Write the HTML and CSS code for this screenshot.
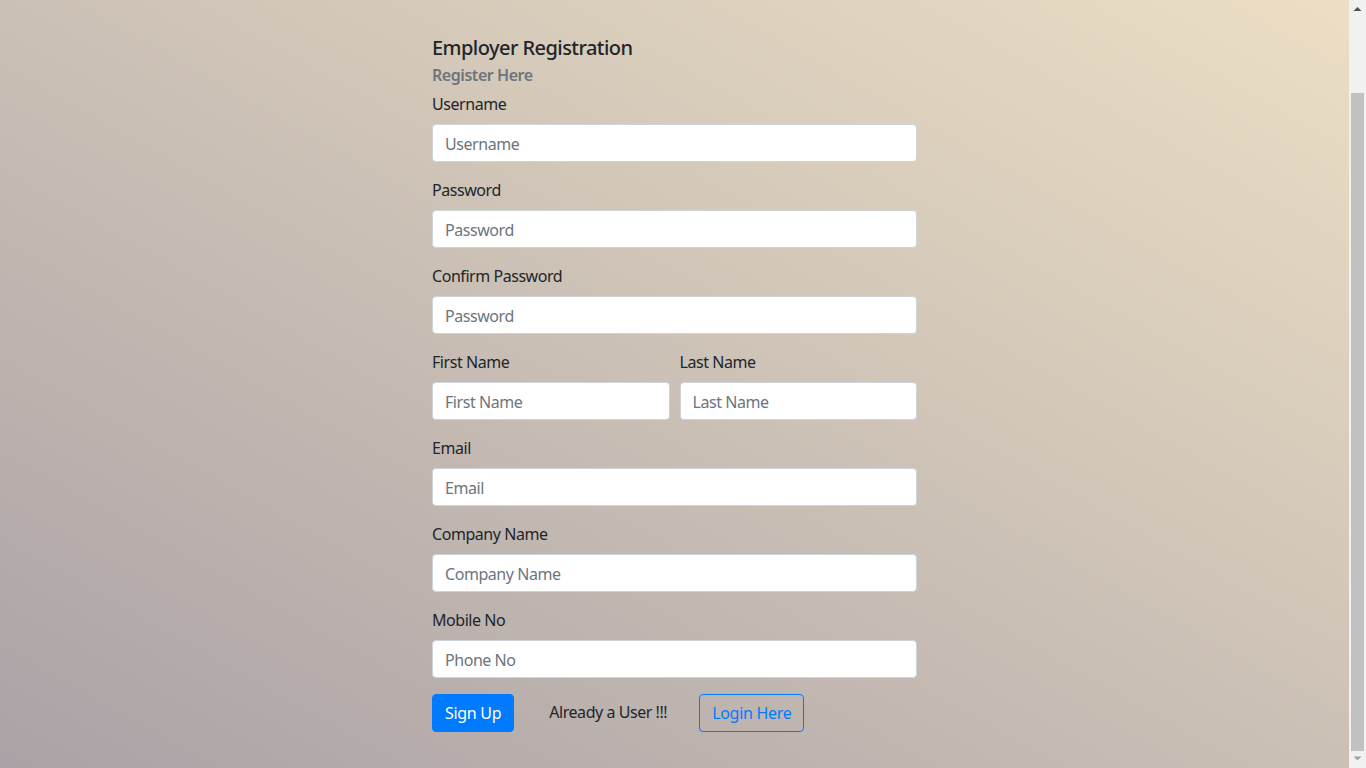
FILE: index.html
```html
<!DOCTYPE html>
<html lang="en">
<head>
<meta charset="utf-8">
<title>Employer Registration</title>
<link rel="stylesheet" href="styles.css">
</head>
<body>
<main class="page">
  <form class="reg-form">
    <h5 class="title">Employer Registration</h5>
    <h6 class="subtitle">Register Here</h6>
    <div class="group">
      <label class="label">Username</label>
      <input class="control" type="text" placeholder="Username">
    </div>
    <div class="group">
      <label class="label">Password</label>
      <input class="control" type="password" placeholder="Password">
    </div>
    <div class="group">
      <label class="label">Confirm Password</label>
      <input class="control" type="password" placeholder="Password">
    </div>
    <div class="split">
      <div class="group">
        <label class="label">First Name</label>
        <input class="control" type="text" placeholder="First Name">
      </div>
      <div class="group">
        <label class="label">Last Name</label>
        <input class="control" type="text" placeholder="Last Name">
      </div>
    </div>
    <div class="group">
      <label class="label">Email</label>
      <input class="control" type="email" placeholder="Email">
    </div>
    <div class="group">
      <label class="label">Company Name</label>
      <input class="control" type="text" placeholder="Company Name">
    </div>
    <div class="group">
      <label class="label">Mobile No</label>
      <input class="control" type="text" placeholder="Phone No">
    </div>
    <div class="actions">
      <button class="btn btn-primary" type="button">Sign Up</button>
      <span class="already">Already a User !!!</span>
      <a class="btn btn-outline" href="#">Login Here</a>
    </div>
  </form>
</main>
<aside class="scrollbar" aria-hidden="true">
  <div class="sb-btn">
    <svg width="17" height="17" viewBox="0 0 17 17"><polygon points="4.5,11 12.5,11 8.5,7" fill="#505050"/></svg>
  </div>
  <div class="sb-track"><div class="sb-thumb"></div></div>
  <div class="sb-btn">
    <svg width="17" height="17" viewBox="0 0 17 17"><polygon points="4.5,5.5 12.5,5.5 8.5,9.5" fill="#a3a3a3"/></svg>
  </div>
</aside>
</body>
</html>
```

FILE: styles.css
```css
html {
  background: linear-gradient(to top right, #aaa2a6 0%, #eddfc5 100%) fixed;
  min-height: 100%;
}
body {
  margin: 0;
  font-family: "Noto Sans", "Open Sans", sans-serif;
  font-size: 16px;
  line-height: 24px;
  letter-spacing: -0.45px;
  color: #212529;
}
.page {
  display: flex;
  justify-content: center;
  padding: 36px 17px 36px 0;
}
.reg-form {
  width: 485px;
}
.title {
  margin: 0 0 6px;
  font-size: 20px;
  line-height: 24px;
  font-weight: 500;
  letter-spacing: -0.55px;
  color: #212529;
}
.subtitle {
  margin: 0 0 7px;
  font-size: 16px;
  line-height: 19px;
  font-weight: 600;
  color: #6c757d;
}
.group {
  margin-bottom: 16px;
}
.label {
  display: inline-block;
  margin-bottom: 8px;
}
.control {
  display: block;
  box-sizing: border-box;
  width: 100%;
  height: 38px;
  padding: 7px 12px 5px;
  border: 1px solid #ced4da;
  border-radius: 4px;
  background: #fff;
  font: inherit;
  letter-spacing: inherit;
  color: #495057;
}
.control::placeholder {
  color: #6c757d;
  opacity: 1;
}
.split {
  display: grid;
  grid-template-columns: 1fr 1fr;
  column-gap: 10px;
}
.actions {
  display: flex;
  align-items: center;
}
.btn {
  display: inline-block;
  box-sizing: border-box;
  padding: 6px 12px;
  border: 1px solid transparent;
  border-radius: 4px;
  font: inherit;
  letter-spacing: -0.3px;
  line-height: 24px;
  text-decoration: none;
  cursor: pointer;
}
.btn-primary {
  background: #007bff;
  border-color: #007bff;
  color: #fff;
}
.btn-outline {
  background: transparent;
  border-color: #007bff;
  color: #007bff;
}
.already {
  margin: -2px 32px 0 35px;
}

/* browser-style scrollbar, drawn over the right edge */
.scrollbar {
  position: fixed;
  top: 0;
  right: 0;
  width: 17px;
  height: 100vh;
  display: flex;
  flex-direction: column;
  background: #f1f1f1;
}
.sb-btn {
  height: 17px;
  flex: none;
}
.sb-btn svg {
  display: block;
}
.sb-track {
  flex: 1;
  display: flex;
  flex-direction: column;
  justify-content: flex-end;
  padding: 0 2px;
}
.sb-thumb {
  height: 658px;
  background: #c1c1c1;
}
```
